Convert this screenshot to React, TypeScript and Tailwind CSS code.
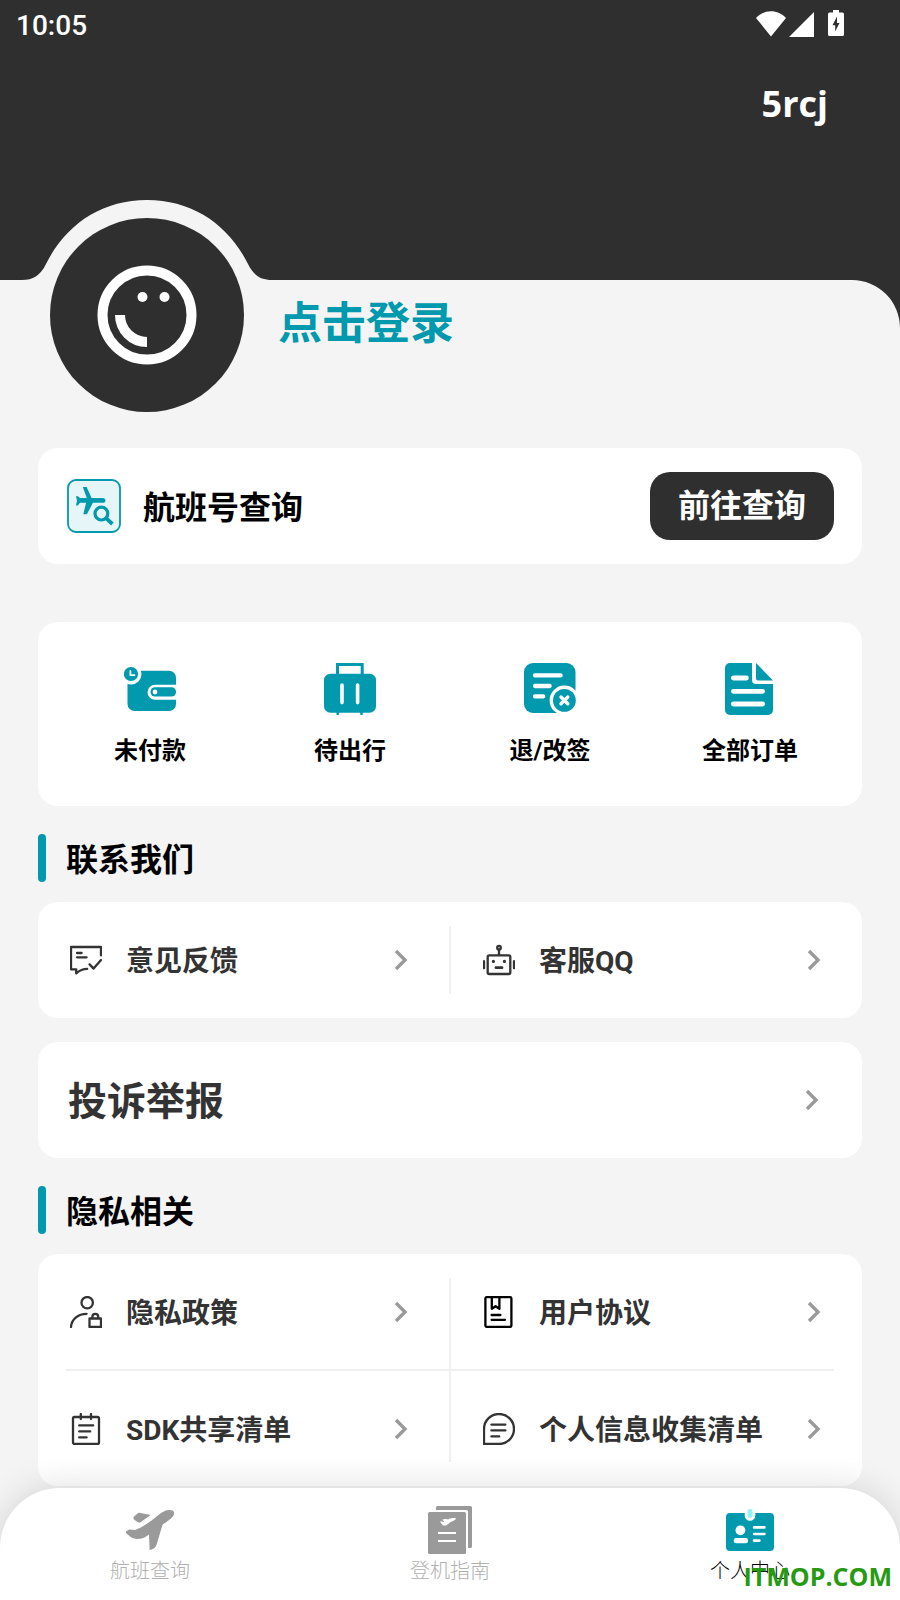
import type { ReactNode } from 'react';

const stroke = {
  fill: 'none',
  stroke: 'currentColor',
  strokeWidth: 2.3,
  strokeLinecap: 'round',
  strokeLinejoin: 'round',
} as const;

function WalletIcon() {
  return (
    <svg viewBox="0 0 52 52" className="size-13" aria-hidden="true">
      <rect x="3.5" y="7.7" width="48.5" height="40.3" rx="7" fill="#0099ad" />
      <circle cx="7" cy="11" r="10.5" fill="#fff" />
      <circle cx="7" cy="11" r="7.1" fill="#0099ad" />
      <path d="M6.4 8v4.2h4" fill="none" stroke="#fff" strokeWidth="1.8" strokeLinecap="round" strokeLinejoin="round" />
      <path d="M52 21.7H31a7.5 7.5 0 0 0 0 15h21z" fill="#fff" />
      <rect x="26.5" y="24.3" width="25.5" height="9.2" rx="4.4" fill="#0099ad" />
      <circle cx="31" cy="29" r="2.4" fill="#fff" />
    </svg>
  );
}

function SuitcaseIcon() {
  return (
    <svg viewBox="0 0 52 52" className="size-13" aria-hidden="true">
      <path d="M13.5 12V1.5h24.7V12" fill="none" stroke="#0099ad" strokeWidth="3" />
      <rect y="10.7" width="52" height="39" rx="6.5" fill="#0099ad" />
      <path d="M13.7 49v3M37.5 49v3" stroke="#0099ad" strokeWidth="2.4" />
      <path d="M18 22v17.6M33.6 22v17.6" stroke="#fff" strokeWidth="3.6" strokeLinecap="round" />
    </svg>
  );
}

function RefundIcon() {
  return (
    <svg viewBox="0 0 52 52" className="size-13" aria-hidden="true">
      <rect width="51.500" height="50" rx="9" fill="#0099ad" />
      <path d="M11 12.4h25.6M11 23h14.6M11 33.4h8.2" stroke="#fff" strokeWidth="4.3" strokeLinecap="round" />
      <circle cx="40.4" cy="37.4" r="14.8" fill="#fff" />
      <circle cx="40.4" cy="37.4" r="11.4" fill="#0099ad" />
      <path d="m37 34 6.8 6.8m0-6.8-6.8 6.8" stroke="#fff" strokeWidth="3.4" strokeLinecap="round" />
    </svg>
  );
}

function OrdersIcon() {
  return (
    <svg viewBox="0 0 52 52" className="size-13" aria-hidden="true">
      <path d="M6 0h22v17a4 4 0 0 0 4 4h17v26a5 5 0 0 1-5 5H6a5 5 0 0 1-5-5V5a5 5 0 0 1 5-5z" fill="#0099ad" />
      <path d="M32 0l17 17.4H34a2 2 0 0 1-2-2z" fill="#0099ad" />
      <path d="M9.4 15h13M9.4 28.3h29.2M9.4 41h29.2" stroke="#fff" strokeWidth="4.8" strokeLinecap="round" />
    </svg>
  );
}

function FlightSearchIcon() {
  return (
    <svg viewBox="0 0 54 54" className="size-[54px]" aria-hidden="true">
      <rect x="1" y="1" width="52" height="52" rx="8" fill="#e6f5f7" stroke="#0099ad" strokeWidth="1.8" />
      <path
        d="M15.8 8h3.8l5 11h11.2c1.8 0 2.6 1.2 2.6 2.4s-.8 2.4-2.6 2.4H25.9l-6 11.4h-3.6l2.8-11.4H13L10.8 26.4H9l1-5L9 17.2h2l2 1.8h6.8z"
        fill="#0099ad"
      />
      <circle cx="34.4" cy="34.6" r="6.4" fill="none" stroke="#0099ad" strokeWidth="3.2" />
      <path d="m39.2 39.4 6.2 5.6" stroke="#0099ad" strokeWidth="3.8" />
    </svg>
  );
}

function FeedbackIcon() {
  return (
    <svg viewBox="0 0 32 32" className="size-8" aria-hidden="true" {...stroke}>
      <path d="M31 11.4V3H1v22.3h5.2v4c3-2.6 6.5-4.4 11-4.4" />
      <path d="M19.6 20.4l4 4.2 7.4-8.6M7 9h4.6M7 13.3h9.6" />
    </svg>
  );
}

function RobotIcon() {
  return (
    <svg viewBox="0 0 32 32" className="size-8" aria-hidden="true" {...stroke}>
      <rect x="4.7" y="11.3" width="22.6" height="18.7" rx="1.5" />
      <circle cx="16" cy="3.7" r="1.8" />
      <path d="M16 6v5M1 17.2v7M31 17.2v7" />
      <path d="M10.4 17.4h.01M21.4 17.4h.01" strokeWidth="3.2" />
      <path d="M13 23.7h6" strokeWidth="2.8" />
    </svg>
  );
}

function UserLockIcon() {
  return (
    <svg viewBox="0 0 32 32" className="size-8" aria-hidden="true" {...stroke}>
      <circle cx="17.2" cy="6.7" r="5.7" />
      <path d="M1 31c.4-7.6 7-13.2 15.6-13.2" />
      <path d="M19.5 22.5H31V31H19.5zM22.4 22v-1.2a2.9 2.9 0 0 1 5.8 0V22" />
    </svg>
  );
}

function NotebookIcon() {
  return (
    <svg viewBox="0 0 32 32" className="size-8" aria-hidden="true" {...stroke}>
      <rect x="3" y="4" width="26" height="27" rx="1.5" />
      <path d="M10.8 1v5M21 1v5M9.2 12.4h14M9.2 18.4h11M9.2 24.4h7.4" />
    </svg>
  );
}

function AgreementIcon() {
  return (
    <svg viewBox="0 0 32 32" className="size-8 text-black" aria-hidden="true" {...stroke}>
      <rect x="2.4" y="1.1" width="26" height="29.8" rx="1.5" />
      <path d="M8.8 1.5v11.3l3.8-2.6 3.8 2.6V1.5M8.6 19h8.8M8.6 23.8h13.4" />
    </svg>
  );
}

function ChatIcon() {
  return (
    <svg viewBox="0 0 32 32" className="size-8" aria-hidden="true" {...stroke}>
      <path d="M16 1a15 15 0 0 1 0 30H1V16A15 15 0 0 1 16 1z" />
      <path d="M8.4 11.6h14M8.4 17.4h14M8.4 23.4h7.8" />
    </svg>
  );
}

function Chevron() {
  return (
    <svg viewBox="0 0 14 22" className="h-[22px] w-3.5 shrink-0" aria-hidden="true">
      <path d="M2 2l9 9-9 9" fill="none" stroke="#9a9a9a" strokeWidth="3.4" />
    </svg>
  );
}

function PlaneTabIcon() {
  return (
    <svg viewBox="0 0 48 48" className="size-12" fill="#9a9a9a" aria-hidden="true">
      <path d="M.4 25.2 3 23.4l6 .6c8-3 16-8.6 24-15.4 4-3.2 6.600-4.400 10-4.600 4-.2 5.600 1.600 5 4.200-.8 3.400-6 6.600-11.400 10.400L30.800 38c-.8 3.600-3.200 5.400-7.200 6L23 28.400c-4 3-7 4.600-12.200 4.600C6 32.600 3 29.600.2 27.200c-.4-.8-.4-1.400.2-2z" />
      <path d="M8 10.4 11.6 7.4c.8-.6 1.6-.6 2.6-.5L24.7 9 13.8 16.7c-2.2-.7-4-1.7-5.8-3.3-.8-1-.8-2 0-3z" />
    </svg>
  );
}

function GuideTabIcon() {
  return (
    <svg viewBox="0 0 48 48" className="size-12" fill="#9a9a9a" aria-hidden="true">
      <path d="M10 4V1.5A1.5 1.5 0 0 1 11.5 0h33A1.5 1.5 0 0 1 46 1.5v39a1.5 1.5 0 0 1-1.5 1.5H42V5.5A1.5 1.5 0 0 0 40.5 4z" />
      <rect x="2" y="6" width="38" height="42" rx="1.5" />
      <path d="M12 27h18M12 35h18" stroke="#fff" strokeWidth="2" />
      <path d="M14 15.8l1.2-.6 2.4.8.6-.6-2-1.6c1.8-1 3.6-.8 5.8-.4 2-1.2 5.4-1.8 8-1.2-.2 2-3 2.8-5 3.6l-4.8 3.6-3.2.2z" fill="#fff" />
    </svg>
  );
}

function ProfileTabIcon() {
  return (
    <svg viewBox="0 0 48 48" className="size-12" aria-hidden="true">
      <rect y="7" width="48" height="38" rx="4" fill="#0099ad" />
      <path d="M18.7 6v3.4a5.3 5.3 0 0 0 10.6 0V6z" fill="#fff" />
      <rect x="21.7" y="3" width="4.7" height="8.8" rx="2" fill="#8ef2ff" />
      <circle cx="14.4" cy="24.3" r="4.9" fill="#fff" />
      <rect x="7.7" y="32" width="14.4" height="5.3" rx="2.4" fill="#fff" />
      <path d="M28 21.4h10.4M28 28h10.4M28 34.6h5.4" stroke="#fff" strokeWidth="2.6" strokeLinecap="round" />
    </svg>
  );
}

const orderItems = [
  { icon: WalletIcon, label: '未付款' },
  { icon: SuitcaseIcon, label: '待出行' },
  { icon: RefundIcon, label: '退/改签' },
  { icon: OrdersIcon, label: '全部订单' },
];

const tabs = [
  { icon: PlaneTabIcon, label: '航班查询', active: false },
  { icon: GuideTabIcon, label: '登机指南', active: false },
  { icon: ProfileTabIcon, label: '个人中心', active: true },
];

function SectionTitle({ children }: { children: ReactNode }) {
  return (
    <div className="mt-7 mb-5 flex h-12 items-center gap-5">
      <span className="h-12 w-2 rounded-full bg-[#0099ad]" />
      <h2 className="pt-1 text-[32px] leading-12 font-bold text-black">{children}</h2>
    </div>
  );
}

function MenuLink({ icon: Icon, label }: { icon: () => ReactNode; label: string }) {
  return (
    <a href="#" className="flex min-w-0 flex-1 items-center gap-6 pr-[41px] pl-8 text-[#333]">
      <Icon />
      <span className="flex-1 pt-1 text-[28px] leading-10 font-bold whitespace-nowrap">{label}</span>
      <Chevron />
    </a>
  );
}

function StatusBar() {
  return (
    <div className="flex h-12 items-center justify-between pr-14 pl-4">
      <span className="pt-1 text-[28px] leading-10 font-medium">10:05</span>
      <svg viewBox="0 0 88 28" className="h-7 w-[88px]" fill="#fff" aria-hidden="true">
        <path d="M15 26.5 0 8C8-1 22-1 30 8z" />
        <path d="M33 27 58 2v25z" />
        <path
          fillRule="evenodd"
          d="M77 0h6v2.5h3.4A1.6 1.6 0 0 1 88 4.1v20.3a1.6 1.6 0 0 1-1.6 1.6H73.6a1.6 1.6 0 0 1-1.6-1.6V4.1a1.6 1.6 0 0 1 1.6-1.6H77zM81 6.5l-4.5 8.7h2.7v6.3l4.3-8.5H81z"
        />
      </svg>
    </div>
  );
}

export default function App() {
  return (
    <div className="flex min-h-screen flex-col bg-[#2f2f2f] font-[Roboto,'Noto_Sans_CJK_SC',sans-serif]">
      <header className="h-[280px] text-white">
        <StatusBar />
        <p className="mt-8 pr-[72px] text-right font-['Open_Sans','Noto_Sans_CJK_SC',sans-serif] text-4xl leading-12 font-bold">
          5rcj
        </p>
      </header>

      <main className="relative flex-1 rounded-tr-[48px] bg-[#f4f4f4] px-[38px] pb-0.5">
        <svg viewBox="0 0 294 81" className="absolute -top-20 left-0 h-[81px] w-[294px]" aria-hidden="true">
          <path d="M22 80c11 0 18-4 24-16C66 24 102 0 147 0s81 24 101 64c6 12 13 16 24 16v1H22z" fill="#f4f4f4" />
        </svg>

        <a href="#" className="relative flex items-start gap-[34px] pb-9 pl-3">
          <span className="-mt-[62px] flex size-[194px] items-center justify-center rounded-full bg-[#2f2f2f]">
            <svg viewBox="0 0 100 100" className="size-[100px]" fill="none" stroke="#fff" strokeWidth="10" aria-hidden="true">
              <circle cx="50" cy="50" r="44.5" />
              <path d="M23 50a27 27 0 0 0 27 27" />
              <circle cx="45.5" cy="32" r="5" fill="#fff" stroke="none" />
              <circle cx="67.5" cy="32" r="5" fill="#fff" stroke="none" />
            </svg>
          </span>
          <span className="mt-5 text-[44px] leading-12 font-bold text-[#0099ad]">点击登录</span>
        </a>

        <section className="flex h-[116px] items-center rounded-[20px] bg-white pr-7 pl-[29px]">
          <FlightSearchIcon />
          <h2 className="ml-[22px] flex-1 pt-1 text-[32px] leading-12 font-bold text-black">航班号查询</h2>
          <button className="h-[68px] rounded-[20px] bg-[#2f2f2f] px-7 text-[32px] leading-12 font-bold text-white">
            前往查询
          </button>
        </section>

        <nav className="mt-[58px] grid h-[184px] grid-cols-4 rounded-[20px] bg-white px-3 pt-[41px]" aria-label="订单">
          {orderItems.map((item) => (
            <a key={item.label} href="#" className="flex flex-col items-center gap-[18px]">
              <item.icon />
              <span className="text-2xl leading-9 font-bold text-black">{item.label}</span>
            </a>
          ))}
        </nav>

        <SectionTitle>联系我们</SectionTitle>
        <div className="flex h-[116px] rounded-[20px] bg-white">
          <MenuLink icon={FeedbackIcon} label="意见反馈" />
          <span className="my-6 w-0.5 bg-[#f0f0f0]" />
          <MenuLink icon={RobotIcon} label="客服QQ" />
        </div>
        <a href="#" className="mt-6 flex h-[116px] items-center justify-between rounded-[20px] bg-white pr-[43px] pl-[30px] text-[#333]">
          <span className="pt-1 text-[39px] leading-12 font-bold">投诉举报</span>
          <Chevron />
        </a>

        <SectionTitle>隐私相关</SectionTitle>
        <div className="rounded-[20px] bg-white">
          <div className="flex h-[115px]">
            <MenuLink icon={UserLockIcon} label="隐私政策" />
            <span className="mt-6 w-0.5 bg-[#f0f0f0]" />
            <MenuLink icon={AgreementIcon} label="用户协议" />
          </div>
          <div className="mx-7 h-0.5 bg-[#f0f0f0]" />
          <div className="flex h-[115px]">
            <MenuLink icon={NotebookIcon} label="SDK共享清单" />
            <span className="mb-6 w-0.5 bg-[#f0f0f0]" />
            <MenuLink icon={ChatIcon} label="个人信息收集清单" />
          </div>
        </div>
      </main>

      <footer className="sticky bottom-0 bg-[#f4f4f4]">
        <nav className="grid h-28 grid-cols-3 rounded-t-[60px] bg-white pt-[18px] shadow-[0_0_36px_rgba(0,0,0,0.14)]">
          {tabs.map((tab) => (
            <a
              key={tab.label}
              href="#"
              className={`flex flex-col items-center text-xl leading-[34px] font-light ${
                tab.active ? 'text-black' : 'text-[#b0b0b0]'
              }`}
            >
              <tab.icon />
              <span>{tab.label}</span>
            </a>
          ))}
        </nav>
        <span className="absolute right-2 bottom-2 font-['Open_Sans',sans-serif] text-[25px] leading-8 font-bold text-[#269a12]">
          ITMOP.COM
        </span>
      </footer>
    </div>
  );
}
